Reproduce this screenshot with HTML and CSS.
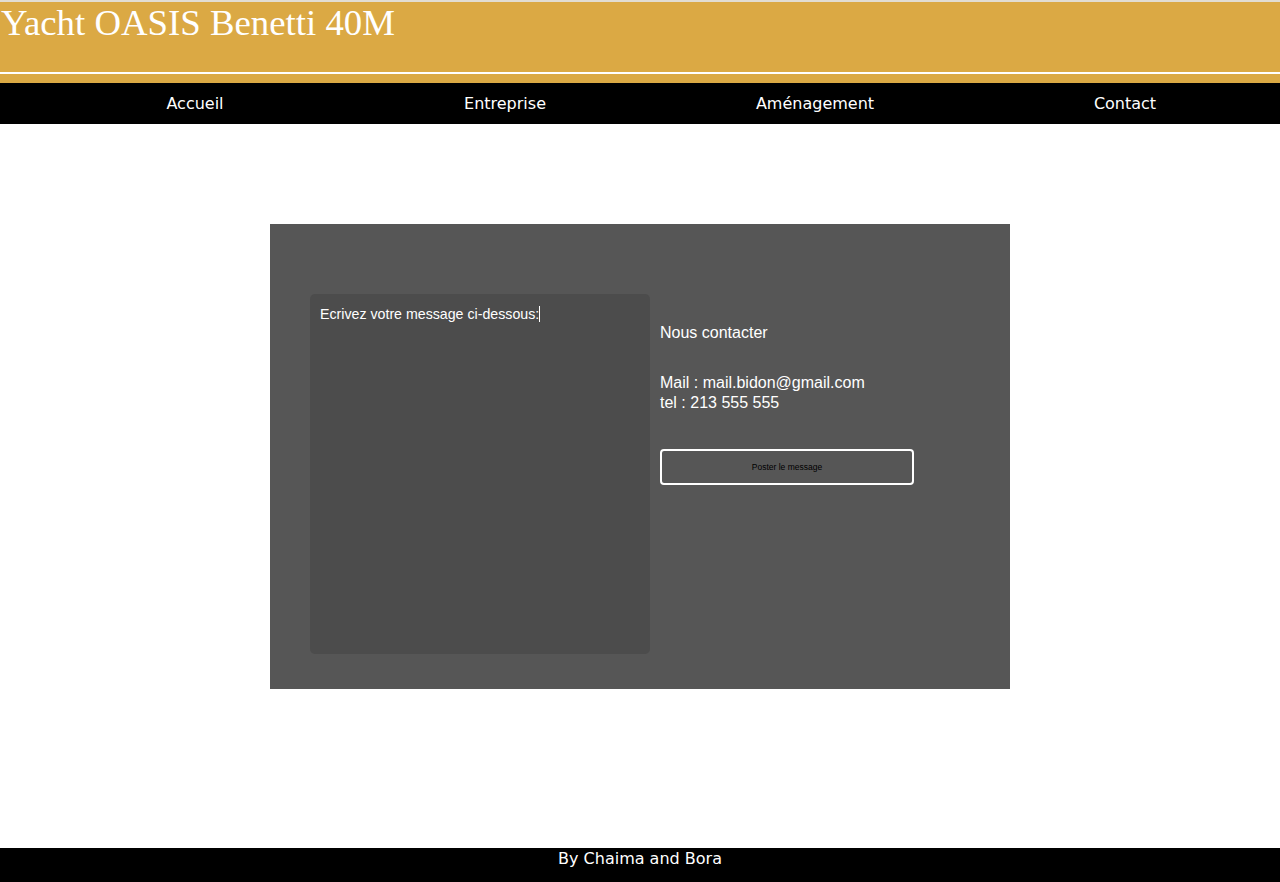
FILE: index.html
```html
<!DOCTYPE html>
<html lang="fr">
<head>
<meta charset="utf-8">
<title>Yacht OASIS Benetti 40M - Contact</title>
<link rel="stylesheet" href="styles.css">
</head>
<body>
<header class="site-header">
  <h1 class="site-title">Yacht OASIS Benetti 40M</h1>
  <div class="header-rule"></div>
</header>
<nav class="main-nav">
  <ul class="nav-list">
    <li class="nav-item"><a href="#">Accueil</a></li>
    <li class="nav-item"><a href="#">Entreprise</a></li>
    <li class="nav-item"><a href="#">Aménagement</a></li>
    <li class="nav-item"><a href="#">Contact</a></li>
  </ul>
</nav>
<main class="content">
  <section class="contact-panel">
    <div class="message-box">Ecrivez votre message ci-dessous:<span class="caret"></span></div>
    <div class="contact-info">
      <p class="contact-title">Nous contacter</p>
      <p class="contact-lines">Mail : mail.bidon@gmail.com<br>tel : 213 555 555</p>
      <button class="post-btn" type="button">Poster le message</button>
    </div>
  </section>
</main>
<footer class="site-footer">By Chaima and Bora</footer>
</body>
</html>
```
FILE: styles.css
```css
html, body {
  margin: 0;
  padding: 0;
}
body {
  min-height: 100vh;
  display: flex;
  flex-direction: column;
  background: #fff;
  font-family: "DejaVu Sans", Verdana, sans-serif;
}
.site-header {
  background: #dba944;
  border-top: 2px solid #e2ddd2;
}
.site-title {
  margin: 0;
  height: 69px;
  padding: 1px 0 0 1px;
  font-family: "Liberation Serif", "Times New Roman", serif;
  font-weight: normal;
  font-size: 36.8px;
  line-height: 40px;
  color: #fff;
}
.header-rule {
  height: 2px;
  background: #fff;
  margin-bottom: 9px;
}
.main-nav {
  background: #000;
  height: 41px;
}
.nav-list {
  list-style: none;
  margin: 0;
  padding: 0 0 0 40px;
  display: flex;
  height: 41px;
}
.nav-item {
  flex: 1;
  text-align: center;
  line-height: 41px;
  font-size: 16px;
}
.nav-item a {
  color: #fff;
  text-decoration: none;
}
.content {
  flex: 1;
  display: flex;
  justify-content: center;
  align-items: flex-start;
  padding-top: 100px;
}
.contact-panel {
  width: 740px;
  height: 465px;
  box-sizing: border-box;
  background: #565656;
  padding: 70px 40px 35px 40px;
  display: flex;
  gap: 10px;
  font-family: "Liberation Sans", Arial, sans-serif;
  color: #fff;
}
.message-box {
  width: 340px;
  height: 360px;
  box-sizing: border-box;
  background: #4c4c4c;
  border-radius: 5px;
  padding: 12px 10px;
  font-size: 14.2px;
  line-height: 16px;
  color: #fff;
}
.caret {
  display: inline-block;
  width: 1px;
  height: 16px;
  background: #fff;
  vertical-align: -3px;
}
.contact-info {
  display: flex;
  flex-direction: column;
  align-items: flex-start;
}
.contact-title {
  margin: 29px 0 0 0;
  font-size: 16px;
  line-height: 20px;
}
.contact-lines {
  margin: 30px 0 0 0;
  font-size: 16px;
  line-height: 20px;
}
.post-btn {
  margin-top: 36px;
  width: 254px;
  height: 36px;
  background: transparent;
  border: 2px solid #fff;
  border-radius: 4px;
  font-family: "Liberation Sans", Arial, sans-serif;
  font-size: 8.5px;
  color: #000;
  padding: 0;
}
.site-footer {
  background: #000;
  color: #fff;
  text-align: center;
  font-size: 16px;
  line-height: 20px;
  padding-top: 1px;
  height: 34px;
  box-sizing: border-box;
}
```
